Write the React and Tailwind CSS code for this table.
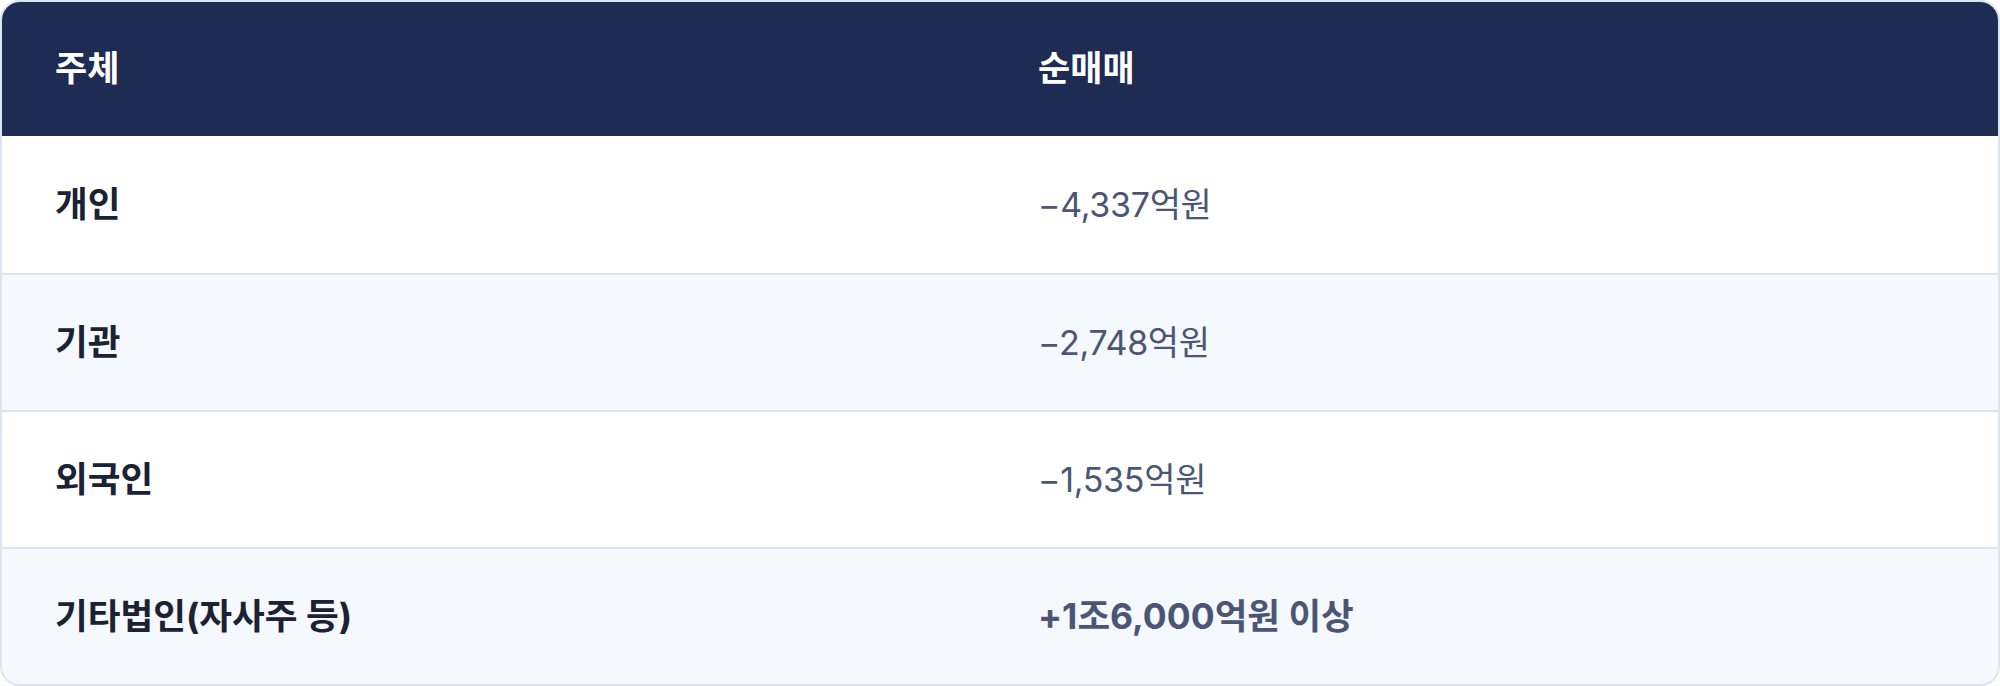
export default function App() {
  const rows = [
    { name: "개인", value: "−4,337억원", bold: false },
    { name: "기관", value: "−2,748억원", bold: false },
    { name: "외국인", value: "−1,535억원", bold: false },
    { name: "기타법인(자사주 등)", value: "+1조6,000억원 이상", bold: true },
  ];
  return (
    <div
      className="w-[2000px] h-[686px] bg-white"
      style={{ fontFamily: 'Inter, "Noto Sans CJK KR", "Noto Sans", sans-serif' }}
    >
      <div className="h-full rounded-[20px] border-2 border-[#dde3ef] overflow-hidden flex flex-col">
        <div className="grid grid-cols-[983px_1fr] h-[134px] items-center bg-[#1e2b53] text-white text-[35px] font-bold">
          <div className="pl-[53px] pb-[2px]">주체</div>
          <div className="pl-[53px] pb-[2px]">순매매</div>
        </div>
        {rows.map((r, i) => (
          <div
            key={i}
            className={
              "grid grid-cols-[983px_1fr] items-center " +
              (i === 0 ? "h-[137px] " : "h-[137px] border-t-2 border-[#dde3ef] ") +
              (i % 2 === 1 ? "bg-[#f5f8fd]" : "bg-white")
            }
          >
            <div className="pl-[53px] text-[35.6px] font-bold text-[#1a2233]">{r.name}</div>
            <div
              className={
                "pl-[53px] text-[#4b5675] " +
                (r.bold ? "font-bold text-[35.5px]" : "font-normal text-[34px] tracking-[-0.3px]")
              }
            >
              {r.value}
            </div>
          </div>
        ))}
      </div>
    </div>
  );
}
